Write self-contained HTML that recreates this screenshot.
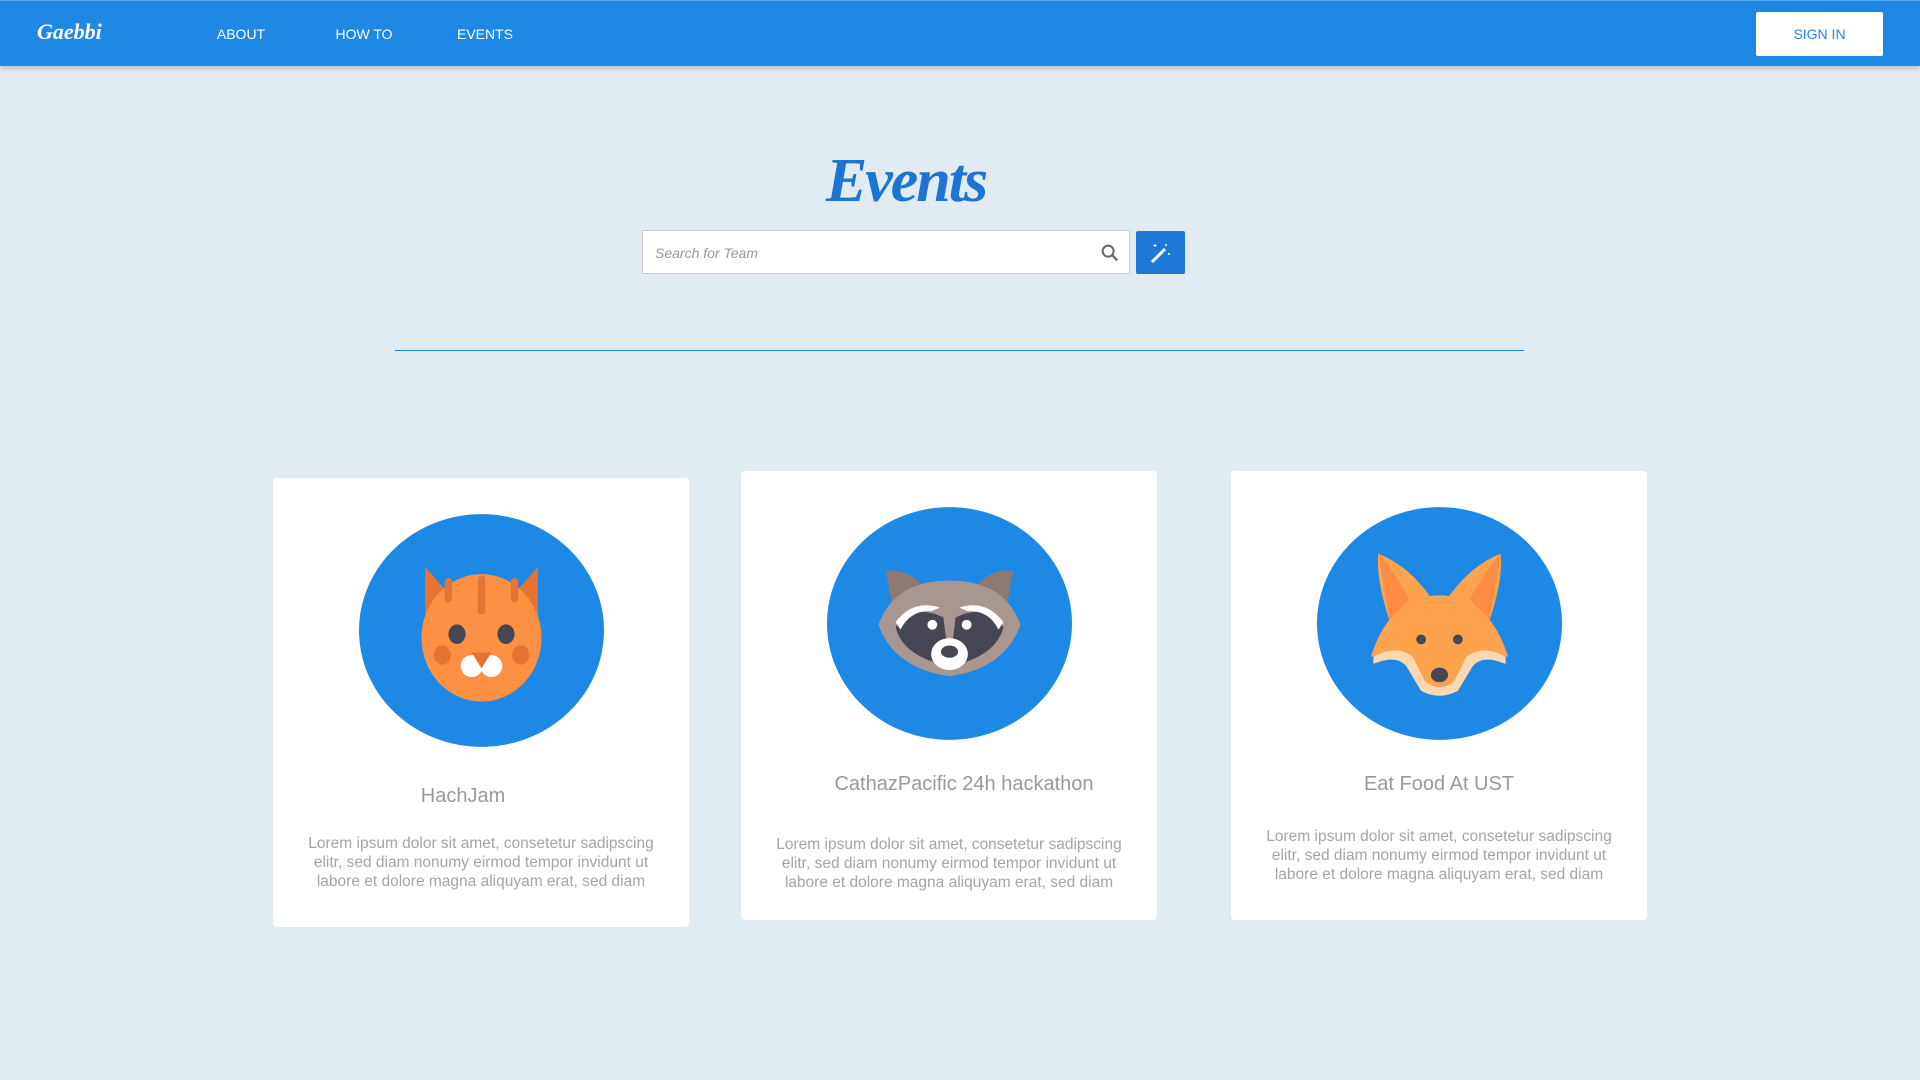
<!DOCTYPE html>
<html><head><meta charset="utf-8"><style>
*{box-sizing:border-box;margin:0;padding:0}
body{width:1920px;height:1080px;background:#e0ebf2;font-family:"Liberation Sans",sans-serif;position:relative;overflow:hidden}
.nav{position:absolute;left:0;top:0;width:1920px;height:66px;background:#1e88e5;box-shadow:0 2px 5px rgba(0,0,0,.2);border-top:1px solid #5aa6ee}
.logo{position:absolute;left:37px;top:18px;color:#fff;font:italic bold 22px "Liberation Serif",serif}
.nl{position:absolute;top:25px;color:#fff;font-size:14px;transform:translateX(-50%)}
.ul{position:absolute;left:181px;top:64px;width:123px;height:2px;background:#1e88e5}
.sign{position:absolute;left:1756px;top:11px;width:127px;height:44px;background:#fff;color:#1e88e5;font-size:14px;text-align:center;line-height:44px;border-radius:2px}
.title{position:absolute;left:806px;width:200px;top:146px;text-align:center;color:#1e74d2;font:italic bold 62px "Liberation Serif",serif;letter-spacing:-2px}
.search{position:absolute;left:642px;top:230px;width:488px;height:44px;background:#fff;border:1px solid #c8ccd0}
.search span{position:absolute;left:12px;top:14px;font-style:italic;font-size:14px;color:#999}
.btn{position:absolute;left:1136px;top:231px;width:49px;height:43px;background:#1e78d8;border-radius:2px}
.line{position:absolute;left:395px;top:350px;width:1129px;height:1px;background:#1e88e5}
.card{position:absolute;width:416px;height:449px;background:#fff;border-radius:4px}
.card svg{position:absolute;left:86px;top:36px}
.ct{position:absolute;left:0;width:100%;text-align:center;color:#999;font-size:20px}
.cp{position:absolute;left:20px;width:376px;text-align:center;color:#a5a5a5;font-size:15.5px;line-height:19px}
</style></head><body>
<div class="nav">
<div class="logo">Gaebbi</div>
<div class="nl" style="left:241px">ABOUT</div>
<div class="nl" style="left:364px">HOW TO</div>
<div class="nl" style="left:485px">EVENTS</div>
<div class="sign">SIGN IN</div>
</div>
<div class="ul"></div>
<div class="title">Events</div>
<div class="search"><span>Search for Team</span>
<svg style="position:absolute;right:8px;top:11px" width="22" height="22" viewBox="0 0 24 24"><circle cx="10" cy="10" r="6" fill="none" stroke="#666" stroke-width="2.2"/><path d="M14.5 14.5L20 20" stroke="#666" stroke-width="2.6"/></svg></div>
<div class="btn"><svg style="position:absolute;left:13px;top:10px" width="24" height="24" viewBox="0 0 24 24"><path d="M3 21L16 8" stroke="#fff" stroke-width="3"/><path d="M6 3v3M4.5 4.5h3M17 3v2M16 4h2M20 12v2M19 13h2" stroke="#fff" stroke-width="1"/></svg></div>
<div class="line"></div>

<div class="card" style="left:273px;top:478px">
<svg width="245" height="233" viewBox="0 0 200 190"><ellipse cx="100" cy="95" rx="100" ry="95" fill="#1e88e5"/>
<path d="M54 43 L80 73 L54 92Z M146 43 L120 73 L146 92Z" fill="#e67332"/>
<ellipse cx="100" cy="101" rx="49" ry="52" fill="#fe9044"/>
<rect x="70" y="52" width="6" height="20" rx="3" fill="#e67332"/><rect x="97" y="50" width="6" height="32" rx="3" fill="#e67332"/><rect x="124" y="52" width="6" height="20" rx="3" fill="#e67332"/>
<ellipse cx="80" cy="98" rx="7" ry="8" fill="#474655"/><ellipse cx="120" cy="98" rx="7" ry="8" fill="#474655"/>
<ellipse cx="68" cy="115" rx="7" ry="8" fill="#e67332"/><ellipse cx="132" cy="115" rx="7" ry="8" fill="#e67332"/>
<ellipse cx="92" cy="124" rx="9" ry="9" fill="#fff"/><ellipse cx="108" cy="124" rx="9" ry="9" fill="#fff"/>
<path d="M92 113h16l-8 13z" fill="#e67332"/></svg>
<div class="ct" style="top:307px;left:-18px">HachJam</div>
<div class="cp" style="top:356px">Lorem ipsum dolor sit amet, consetetur sadipscing elitr, sed diam nonumy eirmod tempor invidunt ut labore et dolore magna aliquyam erat, sed diam</div>
</div>

<div class="card" style="left:741px;top:471px">
<svg width="245" height="233" viewBox="0 0 200 190"><ellipse cx="100" cy="95" rx="100" ry="95" fill="#1e88e5"/>
<path d="M48 52 Q70 50 80 68 L55 90Z M152 52 Q130 50 120 68 L145 90Z" fill="#8e7a73"/>
<path d="M42 96 Q55 60 100 60 Q145 60 158 96 Q145 132 100 138 Q55 132 42 96Z" fill="#a89690"/>
<path d="M56 98 Q70 78 95 90 L100 130 Q62 122 56 98Z M144 98 Q130 78 105 90 L100 130 Q138 122 144 98Z" fill="#474655"/>
<path d="M56 94 Q70 75 92 82 L85 85 Q68 84 60 100Z M144 94 Q130 75 108 82 L115 85 Q132 84 140 100Z" fill="#fff"/>
<circle cx="86" cy="96" r="4" fill="#fff"/><circle cx="114" cy="96" r="4" fill="#fff"/>
<ellipse cx="100" cy="120" rx="15" ry="13" fill="#fff"/><ellipse cx="100" cy="118" rx="7" ry="5" fill="#474655"/></svg>
<div class="ct" style="top:302px;left:15px">CathazPacific 24h hackathon</div>
<div class="cp" style="top:364px">Lorem ipsum dolor sit amet, consetetur sadipscing elitr, sed diam nonumy eirmod tempor invidunt ut labore et dolore magna aliquyam erat, sed diam</div>
</div>

<div class="card" style="left:1231px;top:471px">
<svg width="245" height="233" viewBox="0 0 200 190"><ellipse cx="100" cy="95" rx="100" ry="95" fill="#1e88e5"/>
<path d="M50 38 Q80 50 100 85 L60 95 Q48 60 50 38Z M150 38 Q120 50 100 85 L140 95 Q152 60 150 38Z" fill="#fea34d"/>
<path d="M50 38 Q65 55 75 75 L60 95Z M150 38 Q135 55 125 75 L140 95Z" fill="#fe8c44"/>
<path d="M44 122 Q60 72 100 72 Q140 72 156 122 Q135 118 125 126 L112 146 Q100 154 88 146 L75 126 Q65 118 44 122Z" fill="#fea34d"/>
<path d="M46 122 Q65 112 78 122 L88 142 Q100 152 112 142 L122 122 Q135 112 154 122 L154 128 Q135 120 127 130 L115 150 Q100 158 85 150 L73 130 Q65 120 46 128Z" fill="#fdd7ad"/>
<circle cx="85" cy="108" r="4" fill="#474655"/><circle cx="115" cy="108" r="4" fill="#474655"/>
<ellipse cx="100" cy="137" rx="7" ry="6" fill="#474655"/></svg>
<div class="ct" style="top:302px">Eat Food At UST</div>
<div class="cp" style="top:356px">Lorem ipsum dolor sit amet, consetetur sadipscing elitr, sed diam nonumy eirmod tempor invidunt ut labore et dolore magna aliquyam erat, sed diam</div>
</div>
</body></html>
